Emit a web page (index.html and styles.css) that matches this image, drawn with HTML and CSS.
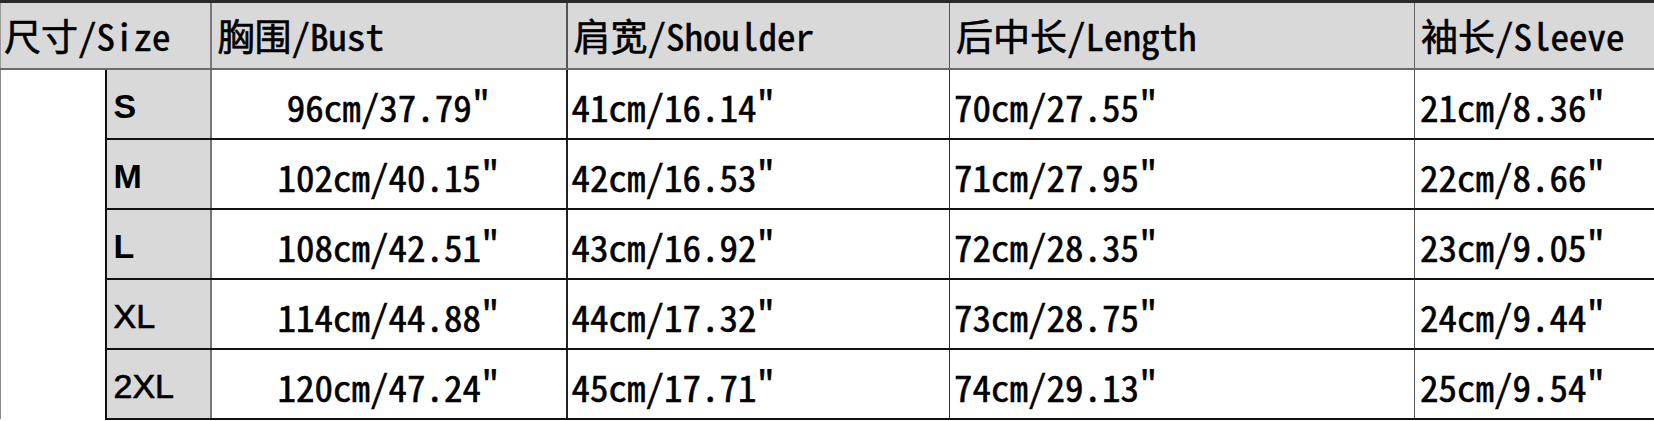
FILE: index.html
```html
<!DOCTYPE html>
<html lang="zh">
<head>
<meta charset="utf-8">
<title>尺码表</title>
<link rel="stylesheet" href="styles.css">
</head>
<body>
<table class="chart">
  <colgroup>
    <col class="c-blank">
    <col class="c-size">
    <col class="c-bust">
    <col class="c-shoulder">
    <col class="c-length">
    <col class="c-sleeve">
  </colgroup>
  <thead>
    <tr class="head">
      <th colspan="2" class="h-size">尺寸/Size</th>
      <th class="h-bust">胸围/Bust</th>
      <th class="h-shoulder">肩宽/Shoulder</th>
      <th class="h-length">后中长/Length</th>
      <th class="h-sleeve">袖长/Sleeve</th>
    </tr>
  </thead>
  <tbody>
    <tr class="row">
      <td rowspan="5" class="blank"></td>
      <td class="size bold">S</td>
      <td class="bust">96cm/37.79"</td>
      <td class="shoulder">41cm/16.14"</td>
      <td class="length">70cm/27.55"</td>
      <td class="sleeve">21cm/8.36"</td>
    </tr>
    <tr class="row">
      <td class="size bold">M</td>
      <td class="bust">102cm/40.15"</td>
      <td class="shoulder">42cm/16.53"</td>
      <td class="length">71cm/27.95"</td>
      <td class="sleeve">22cm/8.66"</td>
    </tr>
    <tr class="row">
      <td class="size bold">L</td>
      <td class="bust">108cm/42.51"</td>
      <td class="shoulder">43cm/16.92"</td>
      <td class="length">72cm/28.35"</td>
      <td class="sleeve">23cm/9.05"</td>
    </tr>
    <tr class="row">
      <td class="size">XL</td>
      <td class="bust">114cm/44.88"</td>
      <td class="shoulder">44cm/17.32"</td>
      <td class="length">73cm/28.75"</td>
      <td class="sleeve">24cm/9.44"</td>
    </tr>
    <tr class="row">
      <td class="size">2XL</td>
      <td class="bust">120cm/47.24"</td>
      <td class="shoulder">45cm/17.71"</td>
      <td class="length">74cm/29.13"</td>
      <td class="sleeve">25cm/9.54"</td>
    </tr>
  </tbody>
</table>
</body>
</html>
```
FILE: styles.css
```css
html, body {
  margin: 0;
  padding: 0;
  background: #ffffff;
  overflow: hidden;
}

.chart {
  border-collapse: collapse;
  table-layout: fixed;
  width: 1660px;
  font-family: "Noto Sans Mono CJK SC", "DejaVu Sans Mono", "Noto Sans CJK SC", monospace;
  font-size: 37px;
  line-height: 1.2;
  color: #000;
  border-top: 3px solid #2a2a2a;
  -webkit-text-stroke: 0.6px #000;
}

.c-blank { width: 105px; }
.c-size { width: 105px; }
.c-bust { width: 356px; }
.c-shoulder { width: 383px; }
.c-length { width: 465px; }
.c-sleeve { width: 246px; }

.head th {
  box-sizing: border-box;
  background: #d9d9d9;
  height: 67px;
  padding: 0 0 0 6px;
  text-align: left;
  font-weight: normal;
  white-space: nowrap;
  border-bottom: 2px solid #6a6a6a;
  vertical-align: middle;
}

.head .h-size { padding-left: 3px; border-right: 2px solid #7a7a7a; border-left: 1px solid #9a9a9a; }
.head .h-bust { border-right: 2px solid #555; }
.head .h-shoulder { border-right: 1px solid #555; }
.head .h-length { border-right: 1px solid #666; }

.row td {
  box-sizing: border-box;
  height: 70px;
  padding: 5px 0 0 4px;
  white-space: nowrap;
  border-bottom: 2px solid #111;
  vertical-align: middle;
}

.row .blank {
  background: #fff;
  border-left: 1px solid #8a8a8a;
  border-bottom: none;
  padding: 0;
}

.row .size {
  background: #d9d9d9;
  border-left: 2px solid #111;
  border-right: 2px solid #777;
  font-family: "Liberation Sans", Arial, sans-serif;
  font-size: 34px;
  padding-left: 7px;
  -webkit-text-stroke: 0.7px #000;
}

.row .size.bold { font-weight: bold; -webkit-text-stroke: 0; }

.row .bust {
  text-align: center;
  padding-left: 0;
  border-right: 2px solid #222;
}

.row .shoulder { border-right: 1px solid #333; }
.row .length { border-right: 1px solid #555; }
.row .sleeve { padding-left: 5px; }
```
